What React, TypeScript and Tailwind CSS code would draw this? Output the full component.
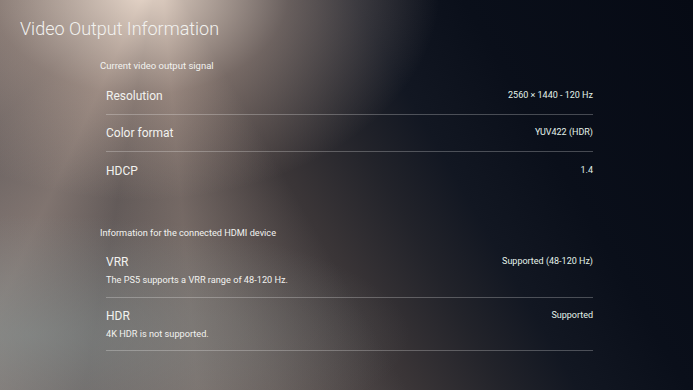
const rows = [
  { label: 'Resolution', value: '2560 × 1440 - 120 Hz', h: 'h-[38px]', line: true },
  { label: 'Color format', value: 'YUV422 (HDR)', h: 'h-[37px]', line: true },
  { label: 'HDCP', value: '1.4', h: 'h-[38px]', line: false },
];

const hdmi = [
  { label: 'VRR', value: 'Supported (48-120 Hz)', note: 'The PS5 supports a VRR range of 48-120 Hz.', pt: 'pt-[15px] h-[59px]' },
  { label: 'HDR', value: 'Supported', note: '4K HDR is not supported.', pt: 'pt-[10px] h-[53px]' },
];

export default function App() {
  return (
    <div className="relative w-[693px] h-[390px] overflow-hidden bg-[#0a101c] text-[#f2f2ef] font-['Roboto',sans-serif]">
      {/* background light */}
      <div className="absolute inset-0 bg-[linear-gradient(60deg,#6a6363_0%,#524c4c_30%,#3a3537_45%,#22232a_55%,#121722_63%,#0a0f1a_75%,#060a14_100%)]" />
      <div className="absolute inset-0 bg-[conic-gradient(from_150deg_at_160px_-40px,transparent_0deg,rgba(150,130,120,0.2)_10deg,rgba(200,175,160,0.3)_25deg,rgba(170,150,140,0.15)_40deg,rgba(210,185,170,0.3)_55deg,rgba(150,135,130,0.15)_75deg,rgba(110,100,100,0.1)_90deg,transparent_105deg)]" />
      <div className="absolute inset-0 bg-[radial-gradient(ellipse_300px_210px_at_140px_-10px,rgba(245,228,214,0.9),rgba(210,185,170,0.4)_50%,transparent_100%)]" />
      <div className="absolute inset-0 bg-[radial-gradient(ellipse_380px_120px_at_30px_335px,rgba(135,150,150,0.5),transparent_100%)]" />

      <div className="relative">
        <div className="pl-[20px] pt-[17px] text-[18px] leading-[24px] font-light">Video Output Information</div>

        <div className="pl-[100px]">
          <div className="mt-[19px] text-[9.5px] leading-[12px]">Current video output signal</div>
          <div className="mt-[5px] ml-[6px] w-[487px]">
            {rows.map((r) => (
              <div key={r.label} className={`${r.h} flex items-center justify-between ${r.line ? 'border-b border-white/25' : ''}`}>
                <span className="text-[12px]">{r.label}</span>
                <span className="text-[9px] text-[#e4f2ea]">{r.value}</span>
              </div>
            ))}
          </div>

          <div className="mt-[37px] text-[9.2px] leading-[12px]">Information for the connected HDMI device</div>
          <div className="ml-[6px] w-[487px]">
            {hdmi.map((r) => (
              <div key={r.label} className={`${r.pt} border-b border-white/25`}>
                <div className="flex items-center justify-between h-[16px]">
                  <span className="text-[12px]">{r.label}</span>
                  <span className="text-[9px] text-[#e4f2ea]">{r.value}</span>
                </div>
                <div className="mt-[3px] text-[9.2px] leading-[13px]">{r.note}</div>
              </div>
            ))}
          </div>
        </div>
      </div>
    </div>
  );
}
